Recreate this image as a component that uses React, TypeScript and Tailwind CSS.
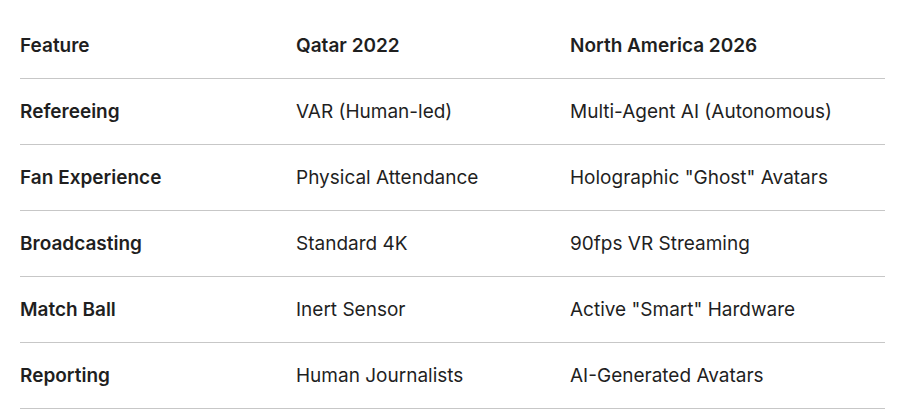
import React from "react";

const rows = [
  ["Refereeing", "VAR (Human-led)", "Multi-Agent AI (Autonomous)"],
  ["Fan Experience", "Physical Attendance", 'Holographic "Ghost" Avatars'],
  ["Broadcasting", "Standard 4K", "90fps VR Streaming"],
  ["Match Ball", "Inert Sensor", 'Active "Smart" Hardware'],
  ["Reporting", "Human Journalists", "AI-Generated Avatars"],
];

export default function App() {
  return (
    <div
      className="w-[902px] h-[412px] bg-white text-[#1f1f1f] pt-[13px] pl-[20px]"
      style={{ fontFamily: "Inter, Roboto, 'Noto Sans', sans-serif" }}
    >
      <div className="w-[865px]">
        <div className="grid grid-cols-[276px_274px_315px] h-[66px] pt-[2px] items-center border-b border-[#c7c7c7] font-semibold text-[19px]">
          <div>Feature</div>
          <div>Qatar 2022</div>
          <div>North America 2026</div>
        </div>
        {rows.map((r, i) => (
          <div
            key={i}
            className="grid grid-cols-[276px_274px_315px] h-[66px] pt-[2px] items-center border-b border-[#c7c7c7] text-[19px]"
          >
            <div className="font-semibold">{r[0]}</div>
            <div>{r[1]}</div>
            <div>{r[2]}</div>
          </div>
        ))}
      </div>
    </div>
  );
}
